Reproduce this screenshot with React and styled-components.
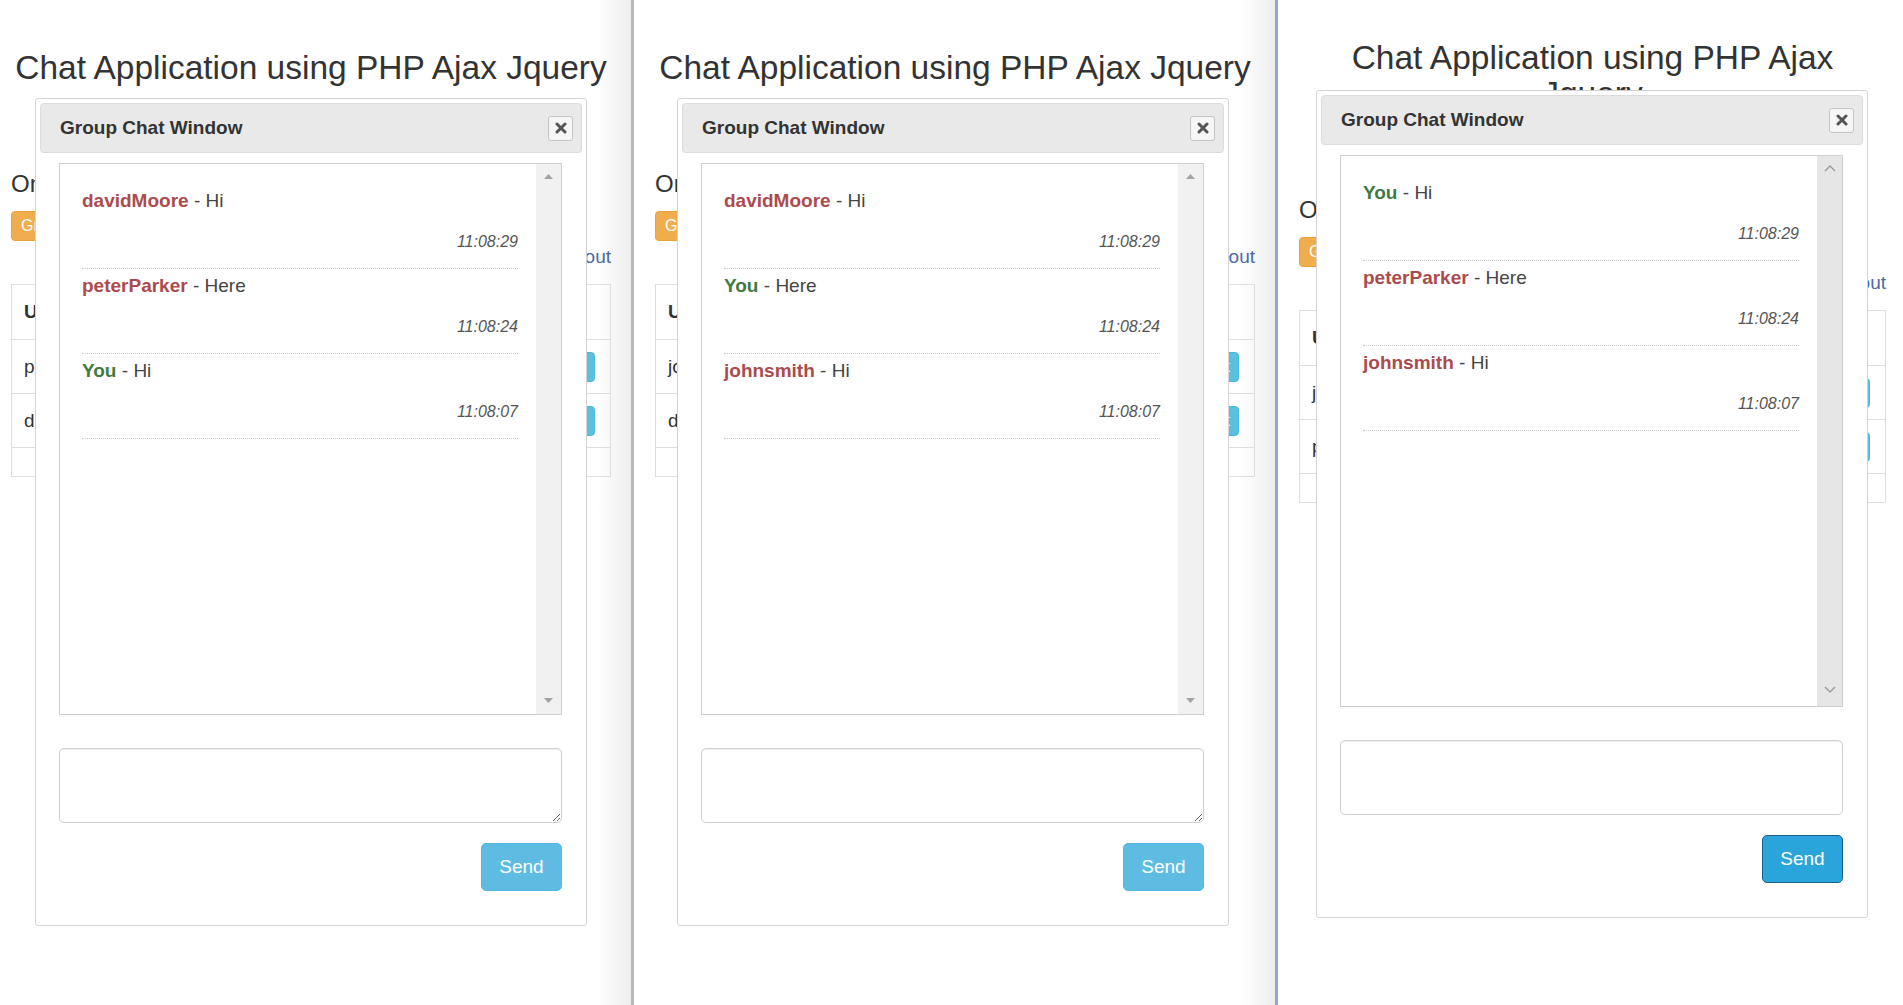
import React from 'react';
import styled, { createGlobalStyle } from 'styled-components';

const GlobalStyle = createGlobalStyle`
  html, body { margin: 0; padding: 0; background: #fff; }
  body { font-family: "Liberation Sans", Arial, Helvetica, sans-serif; color: #333; }
  * { box-sizing: border-box; }
`;

const Screen = styled.div`
  display: flex;
  width: 1903px;
  height: 1005px;
  overflow: hidden;
  background: #fff;
`;

const Panel = styled.section`
  position: relative;
  flex: ${p => (p.$w ? `0 0 ${p.$w}px` : '1 1 auto')};
  height: 100%;
  padding: ${p => p.$top}px 0 0 ${p => p.$inset}px;
  border-right: ${p => (p.$edge ? `3px solid ${p.$edge}` : 'none')};
  background: ${p => (p.$edge ? 'linear-gradient(to right, #fff calc(100% - 34px), #ededed)' : '#fff')};
  overflow: hidden;
`;

const Column = styled.div`
  width: ${p => p.$w}px;
`;

const Title = styled.h1`
  margin: 0 auto;
  max-width: ${p => (p.$max ? `${p.$max}px` : 'none')};
  font-size: 33.5px;
  line-height: 36px;
  font-weight: normal;
  text-align: center;
  color: #333;
`;

const SubHeading = styled.h4`
  margin: 84px 0 0;
  font-size: 24px;
  line-height: 27px;
  font-weight: normal;
  color: #333;
`;

const WarnButton = styled.button`
  display: block;
  margin-top: 14px;
  height: 30px;
  padding: 0 9px;
  font: 16px "Liberation Sans", Arial, sans-serif;
  color: #fff;
  background: #f0ad4e;
  border: 1px solid #eea236;
  border-radius: 4px;
`;

const UserLine = styled.div`
  margin-top: 2px;
  font-size: 19px;
  line-height: 27px;
  text-align: right;
  color: #333;
`;

const LogoutLink = styled.a`
  color: #4a68a8;
  text-decoration: none;
`;

const UserTable = styled.table`
  margin-top: 14px;
  width: 100%;
  border-collapse: collapse;
  border: 1px solid #ddd;
  font-size: 19px;
`;

const Row = styled.tr`
  height: ${p => p.$h}px;
  border-top: 1px solid #ddd;
`;

const HeadCell = styled.th`
  padding: 0 12px;
  text-align: left;
  font-weight: bold;
  color: #333;
`;

const Cell = styled.td`
  padding: 0 ${p => (p.$end ? 15 : 12)}px 0 12px;
  text-align: ${p => (p.$end ? 'right' : 'left')};
  color: #333;
`;

const InfoButton = styled.button`
  height: 30px;
  padding: 0 8px;
  font: 16px "Liberation Sans", Arial, sans-serif;
  color: #fff;
  background: #5bc0de;
  border: 1px solid #46b8da;
  border-radius: 4px;
`;

const Dialog = styled.div`
  position: absolute;
  left: ${p => p.$x}px;
  top: ${p => p.$y}px;
  width: 552px;
  padding: 4px;
  background: #fff;
  border: 1px solid #d3d3d3;
  border-radius: 3px;
`;

const TitleBar = styled.div`
  display: flex;
  align-items: center;
  justify-content: space-between;
  height: 50px;
  padding: 0 8px 0 19px;
  background: #e9e9e9;
  border: 1px solid #dcdcdc;
  border-radius: 4px;
`;

const DialogTitle = styled.span`
  font-size: 19px;
  font-weight: bold;
  color: #333;
`;

const CloseButton = styled.button`
  display: flex;
  align-items: center;
  justify-content: center;
  width: 25px;
  height: 25px;
  padding: 0;
  background: #f6f6f6;
  border: 1px solid #c5c5c5;
  border-radius: 3px;
`;

const DialogBody = styled.div`
  padding: 10px 20px 30px 19px;
`;

const ChatBox = styled.div`
  display: flex;
  height: 552px;
  border: 1px solid #cfcfcf;
  background: #fff;
`;

const MessageList = styled.ul`
  flex: 1;
  margin: 0;
  padding: 20px 18px 0 22px;
  list-style: none;
`;

const MessageItem = styled.li`
  padding: 3px 0 15px;
  border-bottom: 1px dotted #cdcdcd;
`;

const MessageLine = styled.div`
  font-size: 19px;
  line-height: 27px;
  color: #444;
`;

const Author = styled.b`
  color: ${p => (p.$self ? '#3f7a45' : '#ab4b4d')};
`;

const TimeLine = styled.div`
  margin-top: 17px;
  text-align: right;
  font-size: 16px;
  line-height: 22px;
  font-style: italic;
  color: #555;
`;

const ScrollTrack = styled.div`
  display: flex;
  flex-direction: column;
  justify-content: space-between;
  align-items: center;
  width: 25px;
  padding: ${p => (p.$modern ? '8px 0 12px' : '10px 0 11px')};
  background: ${p => (p.$modern ? '#e6e6e6' : '#f1f1f1')};
`;

const MessageInput = styled.textarea`
  display: block;
  width: 100%;
  height: 75px;
  margin-top: 33px;
  padding: 8px 12px;
  font: 19px "Liberation Sans", Arial, sans-serif;
  border: 1px solid #cfcfcf;
  border-radius: 5px;
  box-shadow: inset 0 1px 1px rgba(0, 0, 0, 0.06);
  resize: ${p => (p.$fixed ? 'none' : 'vertical')};
  outline: none;
`;

const ButtonRow = styled.div`
  display: flex;
  justify-content: flex-end;
  margin-top: 20px;
`;

const SendButton = styled.button`
  width: 81px;
  height: 48px;
  font: 19px "Liberation Sans", Arial, sans-serif;
  color: #fff;
  background: ${p => (p.$active ? '#2aa5dc' : '#5ebbe2')};
  border: 1px solid ${p => (p.$active ? '#1d5f86' : '#55b6df')};
  border-radius: 5px;
`;

const CloseIcon = () => (
  <svg width="12" height="12" viewBox="0 0 12 12">
    <path d="M2 2 L10 10 M10 2 L2 10" stroke="#555" strokeWidth="3" strokeLinecap="round" />
  </svg>
);

const TriUp = () => (
  <svg width="9" height="5" viewBox="0 0 9 5"><path d="M0 5 L4.5 0 L9 5 Z" fill="#a3a3a3" /></svg>
);
const TriDown = () => (
  <svg width="9" height="5" viewBox="0 0 9 5"><path d="M0 0 L4.5 5 L9 0 Z" fill="#a3a3a3" /></svg>
);
const ChevUp = () => (
  <svg width="12" height="8" viewBox="0 0 12 8"><path d="M1 7 L6 2 L11 7" fill="none" stroke="#9a9a9a" strokeWidth="1.4" /></svg>
);
const ChevDown = () => (
  <svg width="12" height="8" viewBox="0 0 12 8"><path d="M1 1 L6 6 L11 1" fill="none" stroke="#9a9a9a" strokeWidth="1.4" /></svg>
);

const panels = [
  {
    me: 'johnsmith',
    w: 634, edge: '#b9b9b9', inset: 11, top: 50, col: 600,
    dx: 35, dy: 98, modern: false,
    users: ['peterParker', 'davidMoore'],
    messages: [
      { who: 'davidMoore', text: 'Hi', time: '11:08:29' },
      { who: 'peterParker', text: 'Here', time: '11:08:24' },
      { who: 'You', self: true, text: 'Hi', time: '11:08:07' },
    ],
  },
  {
    me: 'peterParker',
    w: 644, edge: '#8ea8cf', inset: 21, top: 50, col: 600,
    dx: 43, dy: 98, modern: false,
    users: ['johnsmith', 'davidMoore'],
    messages: [
      { who: 'davidMoore', text: 'Hi', time: '11:08:29' },
      { who: 'You', self: true, text: 'Here', time: '11:08:24' },
      { who: 'johnsmith', text: 'Hi', time: '11:08:07' },
    ],
  },
  {
    me: 'davidMoore',
    w: 0, edge: null, inset: 21, top: 40, col: 587, titleMax: 560,
    dx: 38, dy: 90, modern: true,
    users: ['johnsmith', 'peterParker'],
    messages: [
      { who: 'You', self: true, text: 'Hi', time: '11:08:29' },
      { who: 'peterParker', text: 'Here', time: '11:08:24' },
      { who: 'johnsmith', text: 'Hi', time: '11:08:07' },
    ],
  },
];

const ChatWindow = ({ p }) => (
  <Dialog $x={p.dx} $y={p.dy}>
    <TitleBar>
      <DialogTitle>Group Chat Window</DialogTitle>
      <CloseButton aria-label="close"><CloseIcon /></CloseButton>
    </TitleBar>
    <DialogBody>
      <ChatBox>
        <MessageList>
          {p.messages.map((m, i) => (
            <MessageItem key={i}>
              <MessageLine><Author $self={m.self}>{m.who}</Author> - {m.text}</MessageLine>
              <TimeLine>{m.time}</TimeLine>
            </MessageItem>
          ))}
        </MessageList>
        <ScrollTrack $modern={p.modern}>
          {p.modern ? <ChevUp /> : <TriUp />}
          {p.modern ? <ChevDown /> : <TriDown />}
        </ScrollTrack>
      </ChatBox>
      <MessageInput $fixed={p.modern} />
      <ButtonRow>
        <SendButton $active={p.modern}>Send</SendButton>
      </ButtonRow>
    </DialogBody>
  </Dialog>
);

const ChatPage = ({ p }) => (
  <Panel $w={p.w} $edge={p.edge} $inset={p.inset} $top={p.top}>
    <Column $w={p.col}>
      <Title $max={p.titleMax}>Chat Application using PHP Ajax Jquery</Title>
      <SubHeading>Online User</SubHeading>
      <WarnButton>Group Chat</WarnButton>
      <UserLine>Hi - {p.me} - <LogoutLink>Logout</LogoutLink></UserLine>
      <UserTable>
        <tbody>
          <Row $h={55}>
            <HeadCell>Username</HeadCell>
            <HeadCell>Status</HeadCell>
            <HeadCell>Action</HeadCell>
          </Row>
          {p.users.map(u => (
            <Row key={u} $h={54}>
              <Cell>{u}</Cell>
              <Cell>Online</Cell>
              <Cell $end><InfoButton>Start Chat</InfoButton></Cell>
            </Row>
          ))}
          <Row $h={29}>
            <Cell />
            <Cell />
            <Cell $end />
          </Row>
        </tbody>
      </UserTable>
    </Column>
    <ChatWindow p={p} />
  </Panel>
);

export default function App() {
  return (
    <>
      <GlobalStyle />
      <Screen>
        {panels.map((p, i) => <ChatPage key={i} p={p} />)}
      </Screen>
    </>
  );
}
